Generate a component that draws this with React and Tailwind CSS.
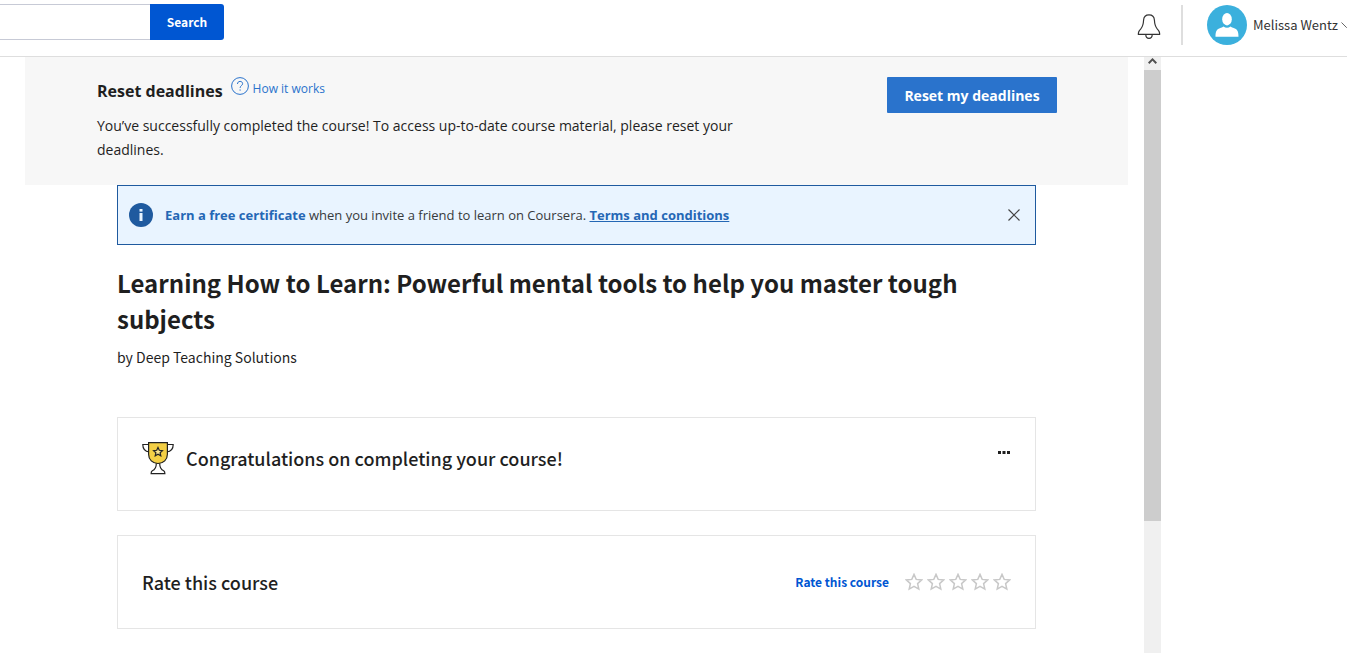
import React from "react";
import clsx from "clsx";

const sourceFont = "font-['Noto_Sans_CJK_SC',sans-serif]";

const BellIcon = () => (
  <svg width="24" height="26" viewBox="0 0 24 26" fill="none" stroke="#333" strokeWidth="1.2">
    <path d="M12 .8c-3.200 0-5.200 2-5.400 5.200-.2 4-1 6.800-2.800 8.800C2.200 16.400 1.400 17.600 1.400 19v1.400h21.200V19c0-1.400-.8-2.600-2.400-4.200-1.800-2-2.600-4.800-2.800-8.800C17.200 2.800 15.200.8 12 .8z" />
    <path d="M8.800 20.600c0 2.400 1.200 3.800 3.200 3.800s3.200-1.400 3.200-3.800" />
  </svg>
);

const AvatarIcon = () => (
  <svg width="40" height="40" viewBox="0 0 40 40">
    <circle cx="20" cy="20" r="20" fill="#3bb0dd" />
    <ellipse cx="20" cy="14.200" rx="4.800" ry="6.200" fill="#fff" />
    <path d="M8.500 31.800c0-5.200.9-7.400 4.300-8.600 1.600-.5 2.700-.9 3.700-1.700 2 1.600 5 1.600 7 0 1 .8 2.100 1.200 3.700 1.700 3.400 1.200 4.300 3.400 4.300 8.600z" fill="#fff" />
  </svg>
);

const HelpIcon = () => (
  <svg width="18" height="18" viewBox="0 0 18 18" fill="none" stroke="#2a73cc">
    <circle cx="9" cy="9" r="8.400" />
    <path d="M6.500 7c0-1.600 1-2.600 2.600-2.600s2.500 1 2.500 2.300c0 1.900-2.500 2-2.500 4.200" />
    <path d="M9.100 12.400v1.300" />
  </svg>
);

const InfoIcon = () => (
  <svg width="24" height="24" viewBox="0 0 24 24">
    <circle cx="12" cy="12" r="12" fill="#1f5a9f" />
    <rect x="10.500" y="6" width="3" height="2.600" fill="#e9f4ff" />
    <rect x="10.500" y="10" width="3" height="8" fill="#e9f4ff" />
  </svg>
);

const TrophyIcon = () => (
  <svg width="32" height="33" viewBox="0 0 32 33" fill="#fff" stroke="#222" strokeWidth="1.200">
    <path d="M7 2.500H.8c0 4.500 2.600 7 6.400 7.400M25 2.500h6.200c0 4.500-2.600 7-6.400 7.400" />
    <path d="M14.300 21.500h3.400c0 4 1.100 6.100 4 7.200.8.500 1.200 1.500 1.200 3H9.100c0-1.500.4-2.500 1.200-3 2.900-1.100 4-3.200 4-7.200z" />
    <path d="M6.600.7h18.800v11.500c0 5.500-4 9.300-9.400 9.300s-9.400-3.800-9.400-9.300z" fill="#f3cf45" />
    <path d="M16 5.500l1.300 2.800 3.100.3-2.300 2.100.7 3.100-2.800-1.600-2.800 1.600.7-3.100-2.300-2.100 3.100-.3z" fill="#f8e391" />
  </svg>
);

const StarIcon = () => (
  <svg width="18" height="18" viewBox="0 0 18 18" fill="none" stroke="#c8c8c8" strokeWidth="1.500">
    <path d="M9 1.400l2.200 5 5.500.5-4.100 3.700 1.200 5.500L9 13.300l-4.800 2.800 1.200-5.500L1.300 6.900l5.500-.5z" />
  </svg>
);

const Header = () => (
  <header className="flex h-[57px] items-start justify-between border-b border-[#dedede]">
    <form className="flex pt-1">
      <input
        type="text"
        aria-label="Search courses"
        className="h-9 w-[150px] border-y border-[#c7cad6] bg-white px-3 text-sm outline-none"
      />
      <button
        type="button"
        className={clsx(sourceFont, "h-9 w-[74px] rounded-r-[3px] bg-[#0056d2] text-[12px] leading-5 font-bold text-white")}
      >
        Search
      </button>
    </form>

    <div className="flex items-center pt-[5px]">
      <button type="button" aria-label="Notifications" className="mr-5 pt-1">
        <BellIcon />
      </button>
      <button
        type="button"
        className={clsx(sourceFont, "flex items-center border-l-2 border-[#dedede] pl-6 text-[13px] leading-5 text-[#333]")}
      >
        <AvatarIcon />
        <span className="ml-1.5 whitespace-nowrap">Melissa Wentz</span>
        <svg className="ml-[3px]" width="6" height="8" viewBox="0 0 6 8" fill="none" stroke="#666">
          <path d="M.5 1.500l5 5 5-5" />
        </svg>
      </button>
    </div>
  </header>
);

const ResetBanner = () => (
  <section className="flex h-32 items-start justify-between bg-[#f7f7f7] pt-5 pr-[71px] pl-[72px] text-[#1f1f1f]">
    <div className="w-[660px]">
      <div className="flex items-start">
        <h2 className="text-[16px] leading-7 font-bold">Reset deadlines</h2>
        <a href="#how" className="ml-2 flex items-start gap-1 text-[12px] leading-6 text-[#2a73cc]">
          <HelpIcon />
          <span>How it works</span>
        </a>
      </div>
      <p className="mt-[9px] text-[14px] leading-6">
        You’ve successfully completed the course! To access up-to-date course material, please reset your
        deadlines.
      </p>
    </div>
    <button type="button" className="h-9 w-[170px] rounded-[1px] bg-[#2a73cc] text-[14px] font-bold text-white">
      Reset my deadlines
    </button>
  </section>
);

const CertificateNotice = () => (
  <div className="flex h-[60px] items-center border border-[#1f5a9f] bg-[#e9f4ff] pr-3.5 pl-[11px]">
    <InfoIcon />
    <p className="ml-3 flex-1 text-[13px] leading-5 text-[#373a3c]">
      <strong className="font-bold text-[#2467b5]">Earn a free certificate</strong> when you invite a friend to
      learn on Coursera.{" "}
      <a href="#terms" className="font-bold text-[#2467b5] underline">
        Terms and conditions
      </a>
    </p>
    <button type="button" aria-label="Close">
      <svg width="14" height="14" viewBox="0 0 14 14" stroke="#444" strokeWidth="1.200">
        <path d="M1.500 1.500l11 11M12.500 1.500l-11 11" />
      </svg>
    </button>
  </div>
);

const Card = ({ className = "", children }) => (
  <section className={clsx("flex h-[94px] justify-between border border-[#e5e5e5] px-6", className)}>
    {children}
  </section>
);

const Scrollbar = () => (
  <div className="flex w-[17px] flex-col bg-[#f0f0f0]">
    <div className="flex h-[13px] justify-center pt-px">
      <svg width="9" height="6" viewBox="0 0 9 6" fill="none" stroke="#505050" strokeWidth="2">
        <path d="M.7 5.200L4.500 1.400l3.800 3.800" />
      </svg>
    </div>
    <div className="h-[451px] bg-[#cdcdcd]" />
  </div>
);

export default function App() {
  return (
    <div className="flex h-screen flex-col overflow-hidden bg-white font-['Open_Sans',sans-serif]">
      <Header />

      <div className="flex min-h-0 flex-1 pr-[186px] pl-[25px]">
        <main className="mr-4 min-w-0 flex-1">
          <ResetBanner />

          <div className={clsx(sourceFont, "px-[92px] text-[#1f1f1f]")}>
            <div className="font-['Open_Sans',sans-serif]">
              <CertificateNotice />
            </div>

            <h1 className="mt-5 text-[24px] leading-9 font-bold">
              Learning How to Learn: Powerful mental tools to help you master tough subjects
            </h1>
            <p className="mt-2 text-[14px] leading-6">by Deep Teaching Solutions</p>

            <Card className="mt-12 items-start pt-6">
              <div className="flex items-start gap-3">
                <TrophyIcon />
                <h2 className="pt-0.5 text-[18px] leading-7 font-medium">Congratulations on completing your course!</h2>
              </div>
              <button type="button" aria-label="More options" className="pt-2">
                <svg width="14" height="5" viewBox="0 0 14 5" fill="#1f1f1f">
                  <path d="M1 1h3v3H1zM5.500 1h3v3h-3zM10 1h3v3h-3z" />
                </svg>
              </button>
            </Card>

            <Card className="mt-6 items-center">
              <h2 className="text-[18px] leading-7 font-medium">Rate this course</h2>
              <div className="flex items-center gap-4">
                <a href="#rate" className="text-[12px] leading-5 font-bold text-[#0056d2]">
                  Rate this course
                </a>
                <div className="flex gap-1">
                  {[1, 2, 3, 4, 5].map((n) => (
                    <button key={n} type="button" aria-label={`${n} stars`}>
                      <StarIcon />
                    </button>
                  ))}
                </div>
              </div>
            </Card>
          </div>
        </main>

        <Scrollbar />
      </div>
    </div>
  );
}
